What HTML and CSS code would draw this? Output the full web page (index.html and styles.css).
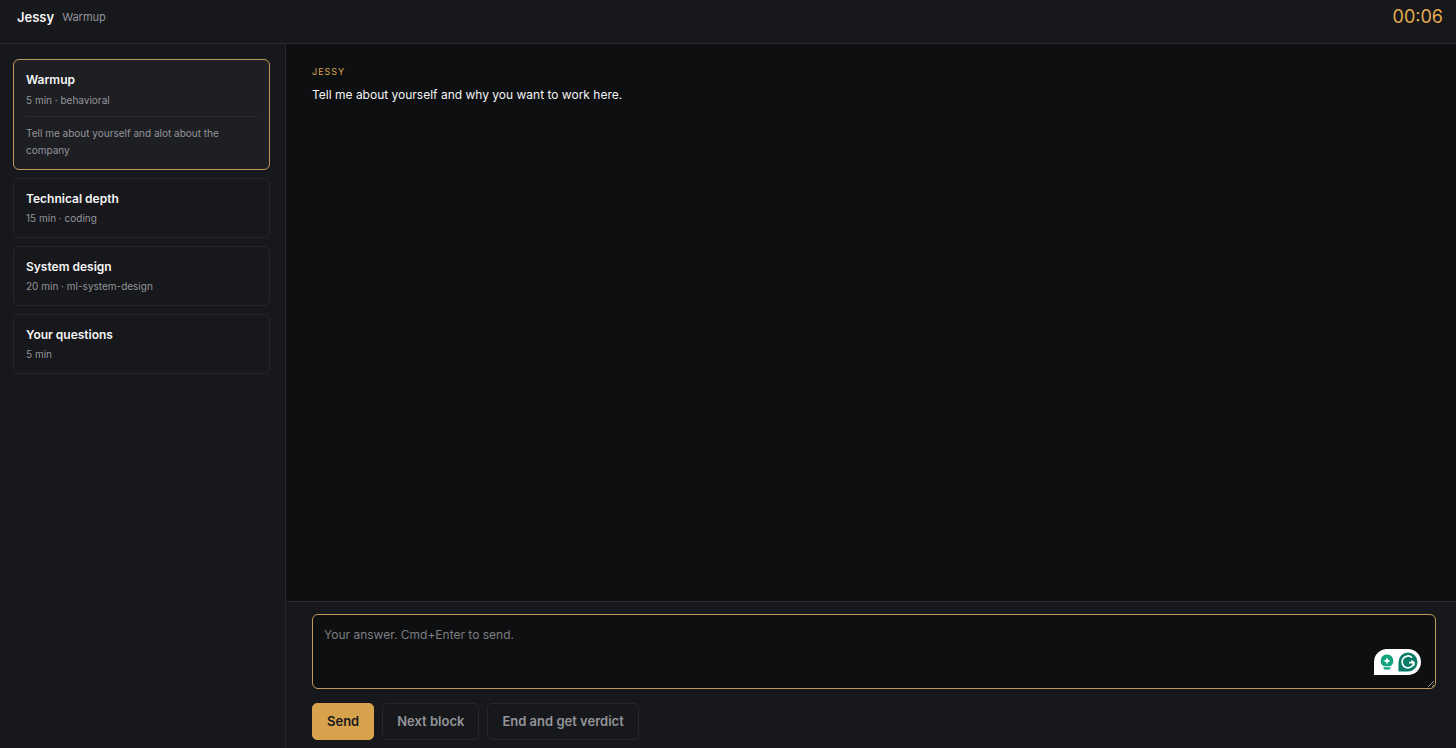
FILE: index.html
```html
<!DOCTYPE html>
<html lang="en">
<head>
<meta charset="utf-8">
<meta name="viewport" content="width=device-width, initial-scale=1">
<title>Jessy – Warmup</title>
<link rel="stylesheet" href="styles.css">
</head>
<body>
<header class="topbar">
  <h1 class="brand">Jessy</h1>
  <span class="stage">Warmup</span>
  <time class="timer">00:06</time>
</header>
<div class="workspace">
  <aside class="sidebar">
    <section class="card card-active">
      <h2 class="card-title">Warmup</h2>
      <p class="card-meta">5 min · behavioral</p>
      <p class="card-note">Tell me about yourself and alot about the company</p>
    </section>
    <section class="card">
      <h2 class="card-title">Technical depth</h2>
      <p class="card-meta">15 min · coding</p>
    </section>
    <section class="card">
      <h2 class="card-title">System design</h2>
      <p class="card-meta">20 min · ml-system-design</p>
    </section>
    <section class="card">
      <h2 class="card-title">Your questions</h2>
      <p class="card-meta">5 min</p>
    </section>
  </aside>
  <main class="interview">
    <div class="transcript">
      <p class="speaker">Jessy</p>
      <p class="message">Tell me about yourself and why you want to work here.</p>
    </div>
    <form class="composer">
      <div class="answer-wrap">
        <textarea class="answer" aria-label="Your answer" placeholder="Your answer. Cmd+Enter to send."></textarea>
        <div class="assist">
          <svg class="assist-icon" viewBox="0 0 20 20" aria-hidden="true">
            <path fill="#10a37f" d="M10 2.5a6.3 6.3 0 0 0-3.2 11.7h6.4A6.3 6.3 0 0 0 10 2.5zM6.5 15.3h7v.6a1.6 1.6 0 0 1-1.6 1.6H8.1a1.6 1.6 0 0 1-1.6-1.6z"/>
            <path fill="#fff" d="M10 5.2l1.1 2.6 2.6 1.1-2.6 1.1-1.1 2.6-1.1-2.6-2.6-1.1 2.6-1.1z"/>
          </svg>
          <svg class="assist-icon" viewBox="0 0 20 20" aria-hidden="true">
            <path fill="#087b68" d="M10 .5a9.5 9.5 0 0 1 0 19H.5V10A9.5 9.5 0 0 1 10 .5z"/>
            <path fill="none" stroke="#fff" stroke-width="1.7" d="M14 5.6A5.9 5.9 0 1 0 15.8 10.6H11M13.4 8.8l2.4 1.8v3.2"/>
          </svg>
        </div>
      </div>
      <div class="actions">
        <button class="btn btn-primary" type="button">Send</button>
        <button class="btn" type="button">Next block</button>
        <button class="btn" type="button">End and get verdict</button>
      </div>
    </form>
  </main>
</div>
</body>
</html>
```
FILE: styles.css
```css
* {
  box-sizing: border-box;
}

body {
  display: flex;
  flex-direction: column;
  min-height: 100vh;
  margin: 0;
  background: #0e0f11;
  color: #f5f5f6;
  font-family: Inter, "Liberation Sans", sans-serif;
  font-size: 13px;
}

h1, h2, p {
  margin: 0;
}

.topbar {
  display: flex;
  align-items: center;
  gap: 8px;
  padding: 5px 13px 14px 17px;
  background: #17181b;
  border-bottom: 1px solid #2a2b2f;
}

.brand {
  font-size: 13px;
  line-height: 24px;
  font-weight: 600;
}

.stage {
  color: #93949a;
  font-size: 11px;
}

.timer {
  margin-left: auto;
  color: #e5ab50;
  font-size: 18px;
  line-height: 24px;
}

.workspace {
  display: flex;
  flex: 1;
}

.sidebar {
  display: flex;
  flex-direction: column;
  gap: 8px;
  flex: 0 0 286px;
  padding: 15px 15px 15px 13px;
  background: #17181b;
  border-right: 1px solid #26272b;
}

.card {
  padding: 10px 12px;
  border: 1px solid #26272b;
  border-radius: 6px;
}

.card-active {
  background: #1e1f23;
  border-color: #c09a5c;
}

.card-title {
  font-size: 12px;
  line-height: 20px;
  font-weight: 600;
}

.card-meta {
  color: #93949a;
  font-size: 10px;
  line-height: 18px;
}

.card-active .card-meta {
  line-height: 20px;
}

.card-note {
  margin-top: 6px;
  padding-top: 8px;
  border-top: 1px solid #2a2b2f;
  color: #93949a;
  font-size: 10px;
  line-height: 17px;
}

.interview {
  display: flex;
  flex: 1;
  flex-direction: column;
  min-width: 0;
}

.transcript {
  flex: 1;
  padding: 20px 26px;
}

.speaker {
  color: #dba64f;
  font-size: 9px;
  line-height: 16px;
  letter-spacing: 1px;
  text-transform: uppercase;
}

.message {
  margin-top: 5px;
  font-size: 12px;
  line-height: 20px;
}

.composer {
  display: flex;
  flex-direction: column;
  gap: 14px;
  padding: 12px 20px 8px 26px;
  background: #17181b;
  border-top: 1px solid #2a2b2f;
}

.answer-wrap {
  display: flex;
  position: relative;
}

.answer {
  width: 100%;
  height: 75px;
  padding: 10px 11px;
  background: #0e0f11;
  border: 1px solid #c09a5c;
  border-radius: 6px;
  outline: none;
  color: inherit;
  font-family: inherit;
  font-size: 12px;
  line-height: 20px;
  resize: vertical;
}

.answer::placeholder {
  color: #7d7e80;
}

.assist {
  display: flex;
  position: absolute;
  right: 15px;
  bottom: 14px;
  align-items: center;
  gap: 1px;
  padding: 3px;
  background: #fff;
  border-radius: 13px 13px 13px 0;
}

.assist-icon {
  width: 20px;
  height: 20px;
}

.actions {
  display: flex;
  gap: 8px;
}

.btn {
  padding: 8px 14px;
  background: #17181b;
  border: 1px solid #26272b;
  border-radius: 5px;
  color: #93949a;
  font-family: inherit;
  font-size: 13px;
  line-height: 19px;
  font-weight: 600;
}

.btn-primary {
  background: #d7a24c;
  border-color: #d7a24c;
  color: #17181b;
}
```
